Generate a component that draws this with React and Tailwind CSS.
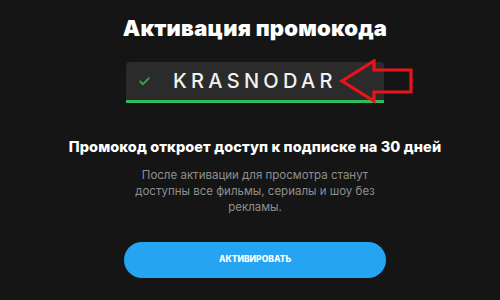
import { Check } from 'lucide-react';

export default function App() {
  return (
    <div
      className="w-[500px] h-[300px] bg-[#151515] flex flex-col items-center pl-[10px] overflow-hidden"
      style={{ fontFamily: 'Inter, "Noto Sans", sans-serif' }}
    >
      <h1 className="mt-[14px] text-[22px] leading-[28px] font-black text-white tracking-[0.2px]">
        Активация промокода
      </h1>

      <div className="relative mt-[20px]">
        <div className="w-[258px] h-[41px] rounded-t-[4px] bg-[#2b2b2b] border-b-[3px] border-[#2ebd5a] flex items-center">
          <Check className="ml-[12px] w-[13px] h-[13px] text-[#2aa34e]" strokeWidth={3.5} />
          <span className="ml-[22px] text-[20px] font-medium text-[#f2f2f2] tracking-[4.3px]">
            KRASNODAR
          </span>
        </div>
        {/* red arrow */}
        <svg
          className="absolute left-[213px] top-[-3px]"
          width="76"
          height="46"
          viewBox="0 0 76 46"
        >
          <path
            d="M3 22 L35 2 L35 11 L72 11 L72 33 L35 33 L35 42 Z"
            fill="none"
            stroke="#e8141b"
            strokeWidth="3.2"
            strokeLinejoin="miter"
          />
        </svg>
      </div>

      <p className="mt-[33px] text-[14.5px] font-extrabold text-white tracking-[0.1px]">
        Промокод откроет доступ к подписке на 30 дней
      </p>

      <p className="mt-[9px] w-[250px] text-center text-[11.5px] leading-[16px] text-[#8e8e8e]">
        После активации для просмотра станут доступны все фильмы, сериалы и шоу без рекламы.
      </p>

      <button className="mt-[27px] w-[262px] h-[36px] rounded-full bg-[#25a4f2] text-white text-[8.5px] font-extrabold">
        АКТИВИРОВАТЬ
      </button>
    </div>
  );
}
